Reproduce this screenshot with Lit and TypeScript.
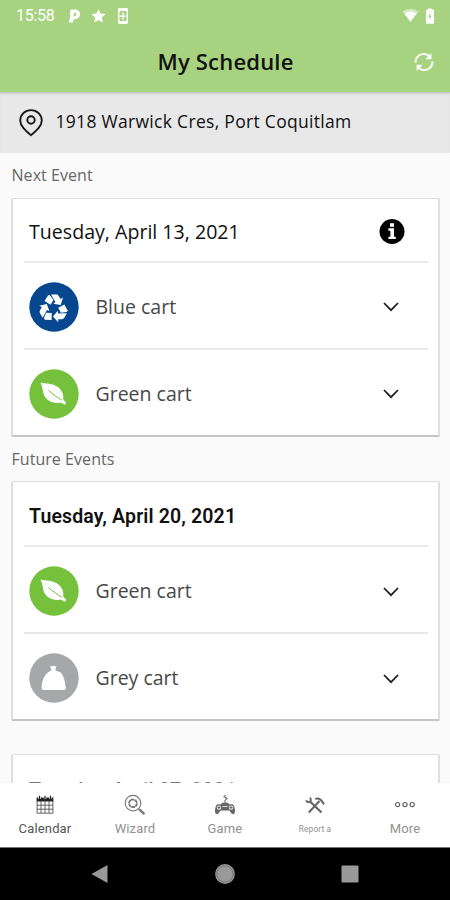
import { LitElement, html, svg, css } from "lit";
import { customElement, property } from "lit/decorators.js";

type CartKind = "blue" | "green" | "grey";

const recycleArm = svg`
  <path d="M-9 -7.400 L-5.500 -13 Q-4.500 -14 -3.500 -13 L0 -8.600 L-3 -3.700 Z"/>
  <path d="M-2.600 -14 L3 -14 Q4.300 -14 5 -12.800 L7 -9.500 L9.500 -10.900 L7.200 -3.600 L-0.200 -4.800 L2 -6.400 Z"/>`;

const cartGlyphs = {
  blue: svg`
    <g transform="translate(24.500 26.500)" fill="#fff">
      ${recycleArm}
      <g transform="rotate(120)">${recycleArm}</g>
      <g transform="rotate(240)">${recycleArm}</g>
    </g>`,
  green: svg`
    <path fill="#fff" d="M11.400 13.600 C17 14.800 23.500 14.600 28.500 17.800 C33 21 34.900 25.600 34.200 30.400 L37.200 33.800 L35.800 35.800 L31.600 33.400 C26 35 19.600 33 16.400 28.600 C13.200 24 14.200 18.500 11.400 13.600 Z"/>
    <path fill="none" stroke="#75c13b" stroke-width="1" d="M19.500 21.500 C24 25.400 28.500 28.600 33 31.200"/>`,
  grey: svg`
    <path fill="#fff" d="M21 12.800 L23 13.600 L24.400 12.400 L25.800 13.600 L27.600 12.800 L26.300 16.800 C26.600 18 29 18 31.200 19.200 C34.500 21.500 36 28 36.800 34.800 Q36.900 37 34.900 37 L14.700 37 Q12.500 37 12.600 34.800 C12.900 29 14 24.500 18 20.200 C20 18.200 22.300 18 22.500 16.800 Z"/>`,
};

@customElement("cart-row")
class CartRow extends LitElement {
  @property() kind: CartKind = "green";
  @property() label = "";

  static styles = css`
    :host {
      display: flex;
      align-items: center;
      height: 87px;
      padding: 0 28px 0 5px;
      border-top: 2px solid #e8e8e8;
      box-sizing: border-box;
    }
    .badge {
      width: 50px;
      height: 50px;
      flex: none;
      margin-top: 3px;
    }
    .blue { fill: #06478f; }
    .green { fill: #75c13b; }
    .grey { fill: #a5a7a9; }
    .label {
      flex: 1;
      margin-left: 16.500px;
      margin-top: 3px;
      font: 400 19.500px/26px "Open Sans", "Noto Sans", sans-serif;
      color: #484848;
    }
    .chevron {
      width: 18px;
      height: 12px;
      margin-top: 4px;
      fill: none;
      stroke: #1c1c1c;
      stroke-width: 1.700;
    }
  `;

  render() {
    return html`
      <svg class="badge" viewBox="0 0 50 50">
        <circle class=${this.kind} cx="25" cy="25" r="24.700" />
        ${cartGlyphs[this.kind]}
      </svg>
      <span class="label">${this.label}</span>
      <svg class="chevron" viewBox="0 0 18 12"><path d="M2 2 L9 9.200 L16 2" /></svg>
    `;
  }
}

const tabs = [
  {
    name: "Calendar",
    style: "tab active",
    icon: svg`
      <path d="M3.600 3.500h16.800v4H3.600z" fill="#222"/>
      <path d="M6.500 2v3M12 2v3M17.500 2v3" stroke="#fff" stroke-width="2.400"/>
      <path d="M6.500 1.800v3.400M12 1.800v3.400M17.500 1.800v3.400" stroke="#222" stroke-width="1.200"/>
      <path d="M4.100 7v12.200h15.800V7M8 7v12M12 7v12M16 7v12M4 11.200h16M4 15.200h16" fill="none" stroke="#555" stroke-width=".9"/>`,
  },
  {
    name: "Wizard",
    style: "tab",
    icon: svg`
      <g fill="none" stroke="#777">
        <circle cx="10" cy="9.200" r="7.800" stroke-width="1.100"/>
        <path d="M7.800 5.600h4.200l2.400 3.600-2.200 3.800H7.800L5.600 9.200z" stroke-width="1.800" stroke-dasharray="3.600 0.800"/>
        <path d="M16 15.200l5.400 5" stroke-width="2.400"/>
      </g>`,
  },
  {
    name: "Game",
    style: "tab",
    icon: svg`
      <path d="M12 10V6.400l2-2-3-1.800 1.600-1.400" fill="none" stroke="#777" stroke-width="1.200"/>
      <path d="M5 10.200h3l1-1.400h6l1 1.400h3c1.600 0 2.300 2 2.700 4 .6 2.600 .4 5.600-1.400 5.900-1.900.3-2.600-2.700-4.200-3.700H7.900c-1.600 1-2.300 4-4.200 3.700-1.800-.3-2-3.300-1.400-5.900.4-2 1.100-4 2.700-4z" fill="#666"/>
      <circle cx="6" cy="13.600" r="2.200" fill="#fff"/><circle cx="18" cy="13.600" r="2.200" fill="#fff"/>
      <path d="M6 12v3.200M4.400 13.600h3.200M18 12v3.200M16.400 13.600h3.200" stroke="#666" stroke-width="1"/>
      <path d="M9.500 12.400h5" stroke="#ddd" stroke-width="1"/>`,
  },
  {
    name: "Report a",
    style: "tab small",
    icon: svg`
      <g fill="none" stroke="#666">
        <path d="M6.500 7L18.500 18.500" stroke-width="2.200"/>
        <path d="M5.800 18.500L16.500 7" stroke-width="2"/>
        <path d="M7 3.600c1.600 2.200.8 4.200-.8 4.500-1.400.3-2.700-.3-3-1.900" stroke-width="1.900"/>
        <path d="M12.200 4.900c3-1.100 5.400 0 7 2.700l1.800 2.800" stroke-width="2"/>
      </g>`,
  },
  {
    name: "More",
    style: "tab",
    icon: svg`
      <g fill="none" stroke="#666" stroke-width="1.200">
        <circle cx="4.600" cy="10.600" r="2.100"/><circle cx="12" cy="10.600" r="2.100"/><circle cx="19.200" cy="10.600" r="2.100"/>
      </g>`,
  },
];

@customElement("app-root")
class AppRoot extends LitElement {
  static styles = css`
    :host {
      display: flex;
      flex-direction: column;
      width: 450px;
      height: 900px;
      overflow: hidden;
      background: #fafafa;
      font-family: "Open Sans", "Noto Sans", sans-serif;
      color: #111;
    }
    svg { display: block; flex: none; }
    .top { background: #a7d380; height: 92px; flex: none; }
    .status {
      height: 32px;
      display: flex;
      align-items: center;
      padding: 0 14px 0 16px;
      color: #fff;
      font: 400 16px/32px Roboto, sans-serif;
    }
    .clock { width: 52px; letter-spacing: -0.300px; }
    .left { width: 64px; height: 20px; }
    .right { width: 36px; height: 20px; margin-left: auto; }
    .titlebar {
      display: grid;
      grid-template-columns: 40px 1fr 40px;
      align-items: center;
      height: 60px;
      padding: 0 6px;
    }
    h1 {
      grid-column: 2;
      margin: -2px 0 0 1px;
      text-align: center;
      font-weight: 600;
      font-size: 22px;
      line-height: 30px;
      letter-spacing: 0.200px;
    }
    .sync { width: 20px; height: 20px; justify-self: center; }
    .address {
      flex: none;
      height: 61px;
      box-sizing: border-box;
      display: flex;
      align-items: center;
      padding-left: 18px;
      background: #e8e8e8;
      box-shadow: inset 0 3px 3px -2px #b5b5b5;
      font-size: 17.500px;
      line-height: 24px;
      letter-spacing: 0.300px;
    }
    .pin { width: 26px; height: 30px; margin-right: 11.500px; }
    .address span { margin-top: -3px; }
    .feed { flex: 1; min-height: 0; overflow: hidden; padding: 0 10px 0 11px; }
    h2 {
      margin: 0;
      height: 44.500px;
      font: 400 16px/45px "Open Sans", sans-serif;
      letter-spacing: 0.050px;
      color: #666;
      padding-left: 0.500px;
    }
    .card {
      height: 239px;
      box-sizing: border-box;
      background: #fff;
      border: 1px solid #dedede;
      border-width: 1px 2px 2px;
      border-bottom-color: #c4c4c4;
      border-radius: 2px;
      padding: 0 10px 0 11px;
    }
    .date {
      display: flex;
      align-items: center;
      justify-content: space-between;
      height: 62px;
      padding: 4px 23px 0 5px;
      font-size: 19.600px;
      box-sizing: border-box;
    }
    .bold { height: 63px; font: 600 19.500px Roboto, sans-serif; padding-top: 6px; letter-spacing: 0.150px; }
    .info { width: 26px; height: 26px; }
    .future { height: 240px; }
    .later { margin-top: 32.500px; }
    .later .date { color: #777; padding-top: 9px; }
    .tabs {
      flex: none;
      height: 65px;
      background: #fff;
      display: grid;
      grid-template-columns: repeat(5, 90px);
      border-bottom: 1px solid #777;
      box-sizing: border-box;
    }
    .tab {
      display: flex;
      flex-direction: column;
      align-items: center;
      padding-top: 11px;
      font: 400 13px/16px Roboto, sans-serif;
      letter-spacing: 0.150px;
      color: #919191;
    }
    .tab svg { width: 24px; height: 22px; margin-bottom: 5px; }
    .active { color: #555; }
    .small { font-size: 8.300px; }
    .system {
      flex: none;
      height: 52px;
      background: #000;
      display: grid;
      grid-template-columns: 100px 125px 125px;
      grid-auto-flow: column;
    }
    .system svg { width: 26px; height: 26px; margin-top: 13px; justify-self: end; margin-right: -13px; }
  `;

  render() {
    return html`
      <header class="top">
        <div class="status">
          <span class="clock">15:58</span>
          <svg class="left" viewBox="0 0 64 20" fill="#fff">
            <path fill-rule="evenodd" d="M2.600 3.600h4.600c3 0 4.800 1.800 4.800 4.500 0 3.100-2.200 5.100-5.200 5.100H5.600l-.9 3.300H.8l1.600-5.800-.7-2.600zM6.200 6.800l-.8 3.400h1.400c1 0 1.600-.7 1.600-1.900 0-1-.6-1.500-1.500-1.500z"/>
            <path d="M30.500 3l2.100 4.500 4.900.6-3.600 3.400.9 4.900-4.300-2.400-4.300 2.400.9-4.900-3.600-3.400 4.900-.6z"/>
            <path fill-rule="evenodd" d="M51.400 2h7.200q1.400 0 1.400 1.400v13.200q0 1.400-1.400 1.400h-7.200q-1.400 0-1.400-1.400V3.400Q50 2 51.400 2zM51.500 5v10h7V5zM54.400 6.500h1.300v3H58v1.200h-2.300v3h-1.300v-3H52V9.500h2.400z"/>
          </svg>
          <svg class="right" viewBox="0 0 36 20" fill="#fff">
            <path opacity=".5" d="M2.300 5.400Q10.500 0 18.700 5.400L16.500 8H4.500z"/>
            <path d="M4.300 7.400Q10.500 3.700 16.700 7.400L10.500 16z"/>
            <path fill-rule="evenodd" d="M28 3.600V2.500h3.600v1.100h1.200q1.200 0 1.200 1.200v11.700q0 1.200-1.200 1.200h-5.600q-1.200 0-1.200-1.200V4.800q0-1.200 1.200-1.200zM30.200 6.500L28.400 11h1.200v3.300l1.900-4.500h-1.300z"/>
          </svg>
        </div>
        <div class="titlebar">
          <h1>My Schedule</h1>
          <svg class="sync" viewBox="0 0 20 20" fill="none" stroke="#fff" stroke-width="1.900">
            <path d="M1.600 10.500A8.200 8.200 0 0 1 15.200 4M18.400 9.500A8.200 8.200 0 0 1 4.800 16"/>
            <path d="M17.400 1v6.200h-6zM2.600 19v-6.200h6z" fill="#fff" stroke="none"/>
          </svg>
        </div>
      </header>
      <div class="address">
        <svg class="pin" viewBox="0 0 26 30" fill="none" stroke="#1a1a1a" stroke-width="1.900">
          <path d="M13 27.200C7.500 22.500 2.200 18 2.200 12.500a10.800 10.400 0 0 1 21.600 0C23.800 18 18.500 22.500 13 27.200z" stroke-linejoin="round"/>
          <circle cx="13" cy="12" r="3.700"/>
        </svg>
        <span>1918 Warwick Cres, Port Coquitlam</span>
      </div>
      <main class="feed">
        <h2>Next Event</h2>
        <section class="card">
          <div class="date">
            <span>Tuesday, April 13, 2021</span>
            <svg class="info" viewBox="0 0 26 26">
              <circle cx="13" cy="12.500" r="12.500"/>
              <path fill="#fff" d="M11 4.300h4v3.400h-4zM9.400 9.300H15v8.400h1.800v2.400H9.400v-2.400h2v-6h-2z"/>
            </svg>
          </div>
          <cart-row kind="blue" label="Blue cart"></cart-row>
          <cart-row kind="green" label="Green cart"></cart-row>
        </section>
        <h2>Future Events</h2>
        <section class="card future">
          <div class="date bold">Tuesday, April 20, 2021</div>
          <cart-row kind="green" label="Green cart"></cart-row>
          <cart-row kind="grey" label="Grey cart"></cart-row>
        </section>
        <section class="card later">
          <div class="date bold">Tuesday, April 27, 2021</div>
        </section>
      </main>
      <nav class="tabs">
        ${tabs.map(
          (t) => html`<div class=${t.style}>
            <svg viewBox="0 0 24 22">${t.icon}</svg>
            <span>${t.name}</span>
          </div>`
        )}
      </nav>
      <footer class="system">
        <svg viewBox="0 0 26 26"><path d="M4.500 13L20.500 4v18z" fill="#999"/></svg>
        <svg viewBox="0 0 26 26">
          <circle cx="13" cy="13" r="9.900" fill="#999"/>
          <circle cx="13" cy="13" r="8.200" fill="none" stroke="#666" stroke-width=".8"/>
        </svg>
        <svg viewBox="0 0 26 26"><rect x="4.500" y="4.500" width="17" height="17" rx="1" fill="#999"/></svg>
      </footer>
    `;
  }
}
